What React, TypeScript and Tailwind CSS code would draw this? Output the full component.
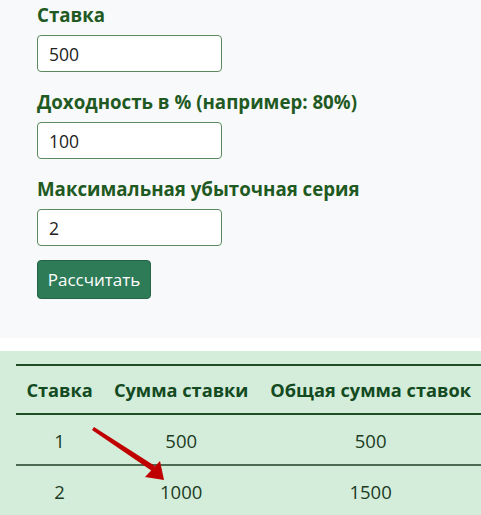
import {useState} from 'react'

const font={fontFamily:'"Open Sans","Noto Sans",sans-serif'}

export default function App(){
  const [stake,setStake]=useState('500')
  const [pct,setPct]=useState('100')
  const [series,setSeries]=useState('2')
  const rows=[{n:1,sum:500,total:500},{n:2,sum:1000,total:1500}]
  return(
    <div className="w-[481px] h-[515px] overflow-hidden bg-white" style={font}>
      <div className="bg-[#f8f9fa] h-[338px] pl-[37px] pt-[2px]">
        <Field label="Ставка" val={stake} set={setStake} mb="mb-[17px]"/>
        <Field label="Доходность в % (например: 80%)" val={pct} set={setPct} mb="mb-[17px]"/>
        <Field label="Максимальная убыточная серия" val={series} set={setSeries} mb="mb-[14px]"/>
        <button className="h-[39px] w-[114px] rounded-[4px] bg-[#2e7b57] border border-[#236546] text-white text-[17px] leading-none">
          Рассчитать
        </button>
      </div>
      <div className="mt-[13px] bg-[#d4edda] h-[200px] pl-4 pt-[13px] relative">
        <table className="w-[466px] border-collapse text-center text-[18.5px] text-[#1c3b1f]">
          <thead>
            <tr className="border-t-2 border-b-2 border-[#1e4d23]">
              <th className="h-[49px] pt-[3px] px-[10px] font-bold text-[#134a1f] whitespace-nowrap text-[18.2px]">Ставка</th>
              <th className="h-[49px] pt-[3px] px-[10px] font-bold text-[#134a1f] whitespace-nowrap text-[18.2px]">Сумма ставки</th>
              <th className="h-[49px] pt-[3px] px-[10px] font-bold text-[#134a1f] whitespace-nowrap text-[18.2px]">Общая сумма ставок</th>
            </tr>
          </thead>
          <tbody>
            {rows.map(r=>(
              <tr key={r.n} className="border-b-2 border-[#4d6b52]">
                <td className="h-[51px] pt-[2px]">{r.n}</td>
                <td className="h-[51px] pt-[2px]">{r.sum}</td>
                <td className="h-[51px] pt-[2px]">{r.total}</td>
              </tr>
            ))}
          </tbody>
        </table>
        <svg className="absolute left-0 top-0 pointer-events-none" width="481" height="164" viewBox="0 351 481 164">
          <polygon points="92,430 94,427 155,466 152,471" fill="#c00000"/>
          <polygon points="164,480 145,477 160,461" fill="#c00000"/>
        </svg>
      </div>
    </div>
  )
}

const Field=({label,val,set,mb}:{label:string;val:string;set:(v:string)=>void;mb:string})=>(
  <div className={mb}>
    <label className="block text-[18.7px] font-bold text-[#1f5a22] leading-[26px] mb-[7px]">{label}</label>
    <input value={val} onChange={e=>set(e.target.value)}
      className="block w-[185px] h-[37px] rounded-[4px] border border-[#5b8a5e] bg-white px-[11px] text-[17.5px] text-[#222] outline-none"/>
  </div>
)
